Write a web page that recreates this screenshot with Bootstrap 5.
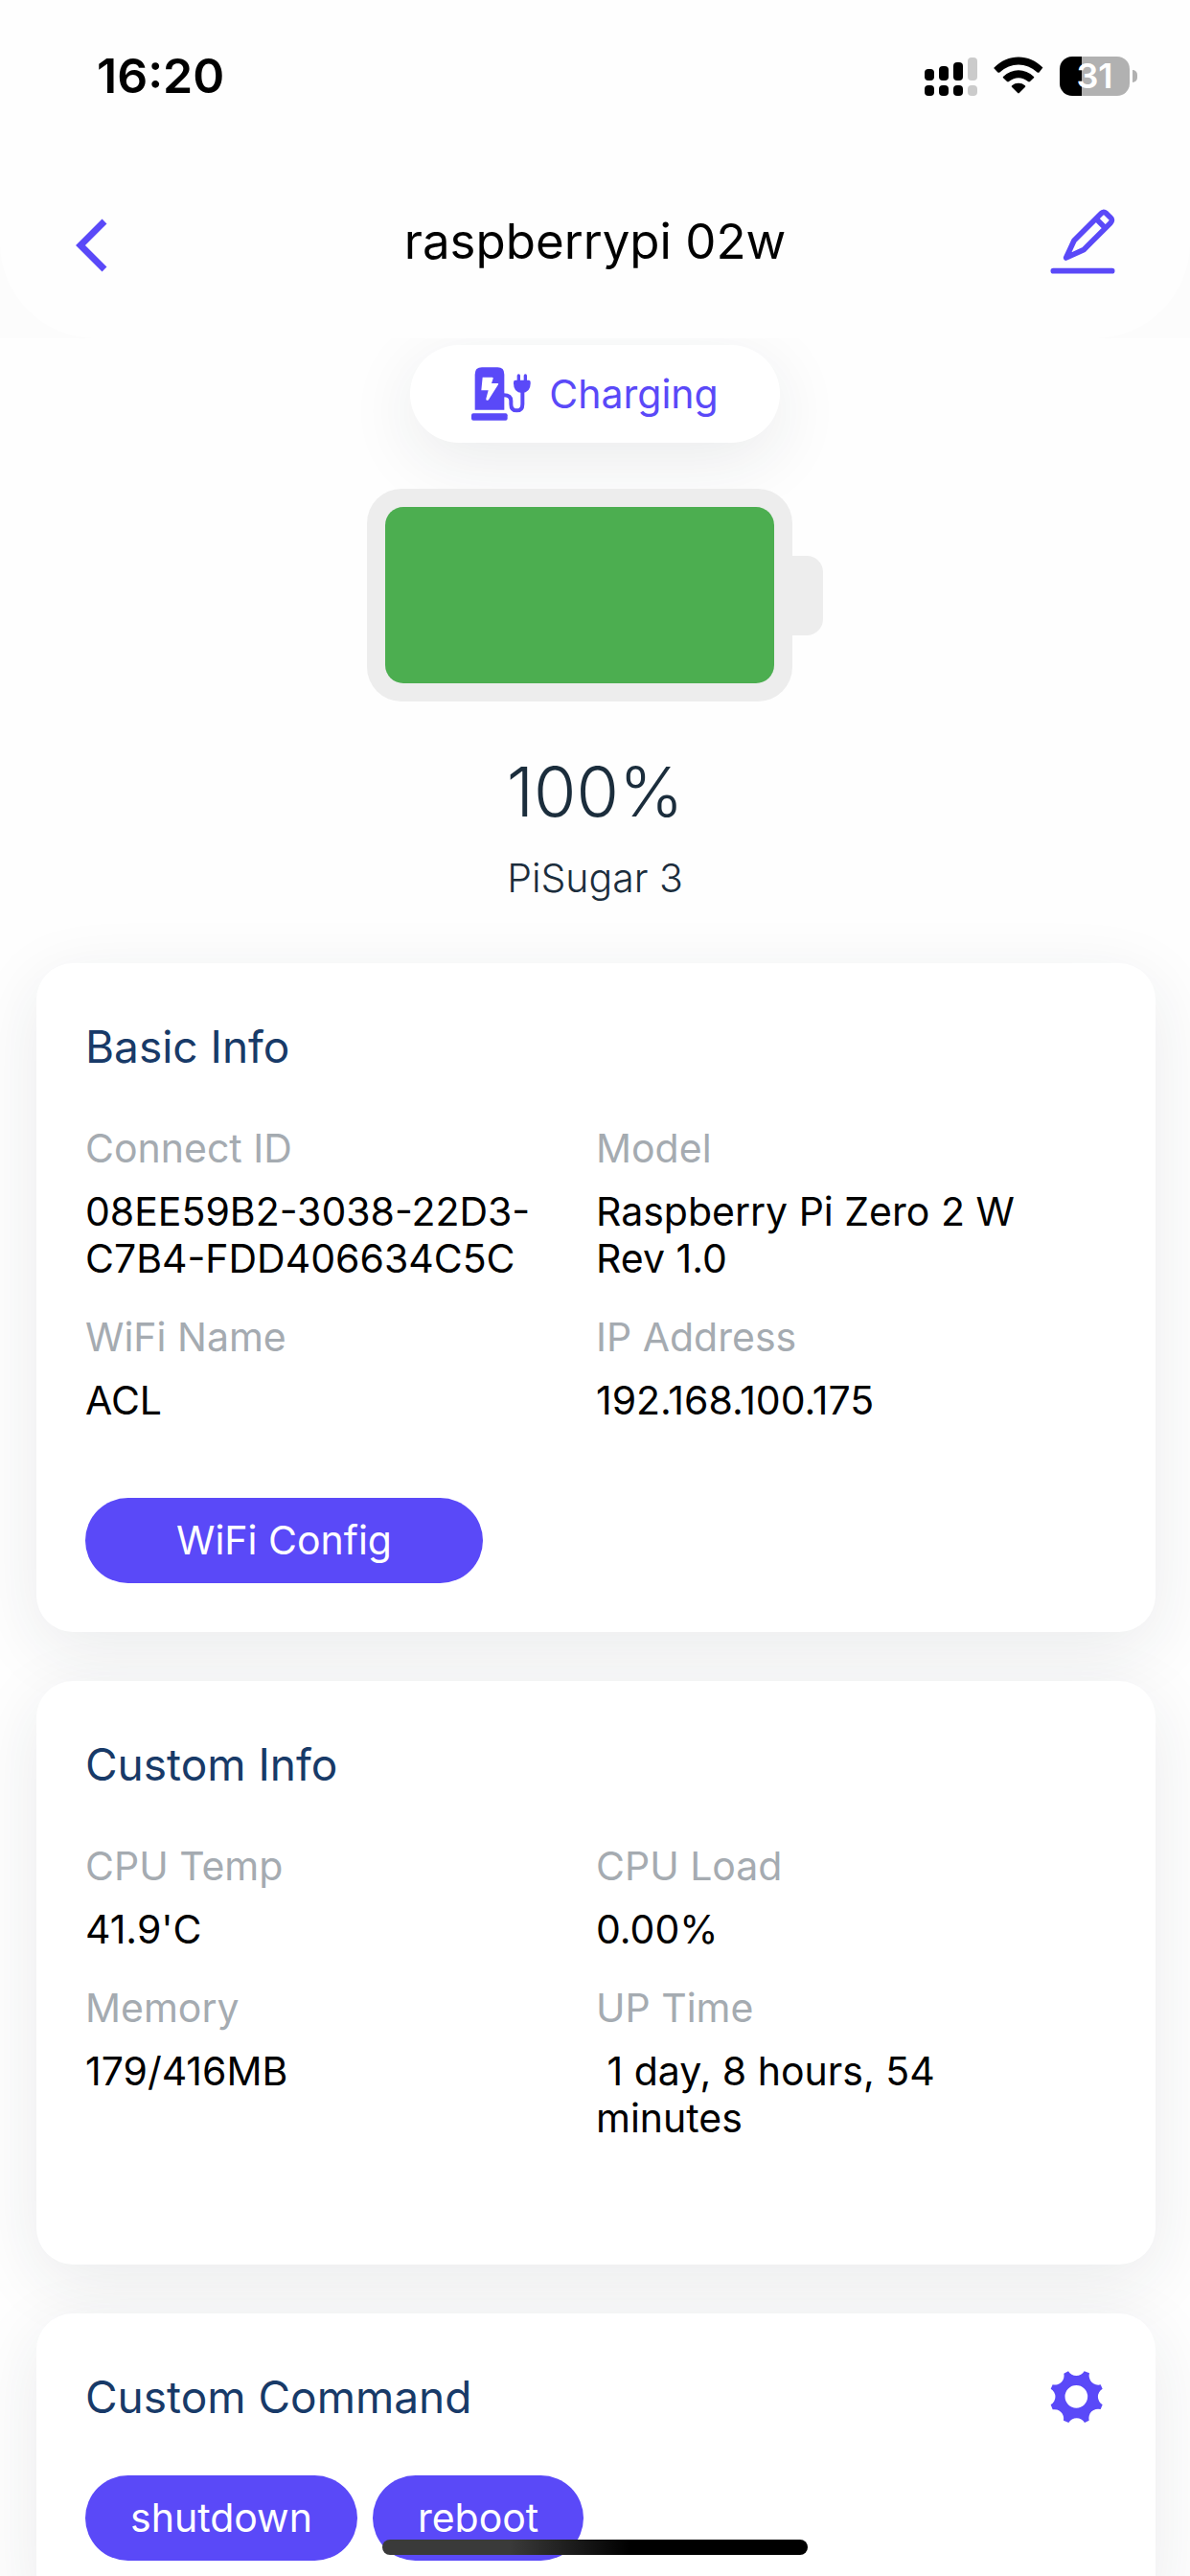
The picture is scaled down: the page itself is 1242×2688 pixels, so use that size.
<!DOCTYPE html>
<html lang="en">
<head>
<meta charset="utf-8">
<meta name="viewport" content="width=device-width, initial-scale=1">
<title>raspberrypi 02w</title>
<link href="https://cdn.jsdelivr.net/npm/bootstrap@5.3.0/dist/css/bootstrap.min.css" rel="stylesheet">
<style>
  :root { --accent: #5a49f8; --navy: #183a68; --ink: #1b2d3c; --muted: #a5abb1; }
  body { font-family: Inter, "Liberation Sans", sans-serif; background: #fefefe; color: #000; font-size: 41px; line-height: 49px; }
  .app { height: 100vh; }
  .top-wrap { background: #fcfcfc; }
  .top-panel { background: #fefefe; border-radius: 0 0 100px 100px; }
  .status-bar { height: 158px; padding: 0 55px 0 101px; }
  .clock { font-size: 50px; font-weight: 600; }
  .status-icons { gap: 17px; }
  .phone-battery { width: 73px; height: 41px; border-radius: 13px; background: linear-gradient(90deg, #000 23px, #b1b1b1 23px); color: #fff; font-size: 36px; font-weight: 600; line-height: 41px; }
  .phone-battery-tip { width: 5px; height: 13px; margin-left: 3px; border-radius: 0 7px 7px 0; background: #b1b1b1; }
  .title-bar { height: 195px; padding: 0 78px 8px 78px; }
  .page-title { font-size: 51px; line-height: 60px; font-weight: 400; }
  .icon-btn { border: 0; background: none; padding: 0; line-height: 0; color: var(--accent); }
  .scroller { overflow-y: auto; scrollbar-width: none; min-height: 0; }
  .scroller::-webkit-scrollbar { display: none; }
  .hero { padding: 7px 0 64px; color: var(--ink); }
  .soft { box-shadow: 0 18px 72px rgba(36, 40, 60, .09); }
  .charge-pill { height: 102px; padding: 0 64px; gap: 19px; border-radius: 51px; background: #fff; color: var(--accent); margin-bottom: 48px; }
  .cell { width: 444px; height: 222px; padding: 19px; border-radius: 36px; background: #ededed; }
  .cell-level { height: 100%; border-radius: 19px; background: #4cae50; }
  .cell-tip { width: 32px; height: 83px; border-radius: 0 17px 17px 0; background: #ededed; }
  .percent { font-size: 72px; line-height: 88px; font-weight: 300; margin: 50px 0 22px; }
  .thin { font-weight: 300; }
  .panels { gap: 51px; padding: 0 36px 51px 38px; }
  .panel { border: 0; border-radius: 38px; background: #fff; padding: 57px 51px 51px; }
  .panel-title { font-size: 46px; line-height: 60px; font-weight: 400; color: var(--navy); margin: 0; }
  .panel-head { margin-bottom: 52px; }
  .facts { margin-bottom: 44px; }
  .fact { margin-bottom: 33px; padding-right: 51px; }
  .fact dt { font-weight: 400; color: var(--muted); margin-bottom: 17px; }
  .fact dd { margin: 0; }
  .btn-pill { --bs-btn-color: #fff; --bs-btn-bg: var(--accent); --bs-btn-hover-color: #fff; --bs-btn-hover-bg: #4938e6; height: 89px; border: 0; border-radius: 45px; padding: 0 47px; font-size: 41px; line-height: 49px; }
  .btn-wide { width: 415px; }
  .home-bar { width: 444px; height: 16px; bottom: 22px; border-radius: 8px; background: linear-gradient(90deg, #3a3a3a 30%, #000 58%); }
</style>
</head>
<body>
<div class="app d-flex flex-column">
  <header class="top-wrap flex-shrink-0">
    <div class="top-panel">
      <div class="status-bar d-flex align-items-center justify-content-between">
        <span class="clock">16:20</span>
        <div class="status-icons d-flex align-items-center">
          <svg width="55" height="41" viewBox="0 0 55 41" aria-label="Signal">
            <g fill="#000"><rect x="0" y="13" width="10" height="12" rx="4"/><rect x="15" y="10" width="10" height="15" rx="4"/><rect x="30" y="6" width="10" height="19" rx="4"/><rect x="0" y="30" width="10" height="11" rx="4"/><rect x="15" y="30" width="10" height="11" rx="4"/><rect x="30" y="30" width="10" height="11" rx="4"/></g>
            <g fill="#cbcbcb"><rect x="45" y="1" width="10" height="24" rx="4"/><rect x="45" y="30" width="10" height="11" rx="4"/></g>
          </svg>
          <svg width="52" height="40" viewBox="0 0 52 40" aria-label="Wi-Fi">
            <path d="M.6 11.600C15-3.200 37-3.200 51.400 11.600L47.600 16.400Q46.600 17.300 45.600 16.400C34 5.700 18 5.700 6.400 16.400Q5.400 17.300 4.400 16.400L.6 12.600Q0 12 .6 11.600ZM10 21C19.500 12 32.500 12 42 21Q42.600 21.600 42 22.200L38 26.100Q37 27 36 26.100C30 21 22 21 16 26.100Q15 27 14 26.100L10 22.200Q9.400 21.600 10 21ZM19.200 30.200C23 26.900 29 26.900 32.800 30.200Q33.800 31 32.800 32L26.800 38Q26 38.800 25.200 38L19.200 32Q18.200 31 19.200 30.200Z"/>
          </svg>
          <div class="d-flex align-items-center">
            <div class="phone-battery text-center">31</div>
            <div class="phone-battery-tip"></div>
          </div>
        </div>
      </div>
      <nav class="title-bar d-flex align-items-center justify-content-between" aria-label="Device">
        <button class="icon-btn" type="button" aria-label="Back">
          <svg width="68" height="70" viewBox="0 0 68 70" fill="none" stroke="currentColor" stroke-width="7"><path d="M31 14L6 39L31 64"/></svg>
        </button>
        <h1 class="page-title m-0">raspberrypi 02w</h1>
        <button class="icon-btn" type="button" aria-label="Edit name">
          <svg width="68" height="70" viewBox="106 81 204 210" fill="none" stroke="currentColor" stroke-width="17" stroke-linejoin="round" stroke-linecap="round"><path d="M116 278H300M156 237L181 183L265 99Q273 90 282 98L294 110Q304 119 295 128L211 212ZM250 115L279 144"/></svg>
        </button>
      </nav>
    </div>
  </header>

  <main class="scroller flex-grow-1">
    <section class="hero d-flex flex-column align-items-center">
      <div class="charge-pill soft d-flex align-items-center">
        <svg width="62" height="56" viewBox="0 0 186 168" fill="currentColor" aria-hidden="true">
          <path fill-rule="evenodd" d="M11 134V23Q11 1 33 1H82Q103 1 103 23V134ZM35 32L31 73H53L46 99Q45 105 51 104Q54 104 56 99L84 55Q86 51 82 51H63L68 36Q69 32 65 32Z"/>
          <rect x="0" y="145" width="113" height="22" rx="6"/>
          <path d="M101 88Q124 88 124 106V116Q124 136 142 136Q160 136 160 116V76" fill="none" stroke="currentColor" stroke-width="12"/>
          <path d="M132 47Q132 41 138 41H179Q185 41 185 47V52Q185 80 158 81Q132 80 132 52Z"/>
          <path d="M148 45V27M169 45V27" stroke="currentColor" stroke-width="10" stroke-linecap="round"/>
        </svg>
        <span>Charging</span>
      </div>
      <div class="d-flex align-items-center" role="img" aria-label="Battery full">
        <div class="cell"><div class="cell-level" style="width:100%"></div></div>
        <div class="cell-tip"></div>
      </div>
      <div class="percent">100%</div>
      <div class="thin">PiSugar 3</div>
    </section>

    <div class="panels d-flex flex-column">
      <section class="panel card soft">
        <div class="panel-head"><h2 class="panel-title">Basic Info</h2></div>
        <dl class="facts row g-0">
          <div class="fact col-6"><dt>Connect ID</dt><dd>08EE59B2-3038-22D3-<wbr>C7B4-FDD406634C5C</dd></div>
          <div class="fact col-6"><dt>Model</dt><dd>Raspberry Pi Zero 2 W Rev 1.0</dd></div>
          <div class="fact col-6"><dt>WiFi Name</dt><dd>ACL</dd></div>
          <div class="fact col-6"><dt>IP Address</dt><dd>192.168.100.175</dd></div>
        </dl>
        <div class="d-flex"><button class="btn btn-pill btn-wide" type="button">WiFi Config</button></div>
      </section>

      <section class="panel card soft">
        <div class="panel-head"><h2 class="panel-title">Custom Info</h2></div>
        <dl class="facts row g-0">
          <div class="fact col-6"><dt>CPU Temp</dt><dd>41.9'C</dd></div>
          <div class="fact col-6"><dt>CPU Load</dt><dd>0.00%</dd></div>
          <div class="fact col-6"><dt>Memory</dt><dd>179/416MB</dd></div>
          <div class="fact col-6"><dt>UP Time</dt><dd>&nbsp;1 day, 8 hours, 54 minutes</dd></div>
        </dl>
      </section>

      <section class="panel card soft">
        <div class="panel-head d-flex align-items-center justify-content-between">
          <h2 class="panel-title">Custom Command</h2>
          <button class="icon-btn" type="button" aria-label="Command settings">
            <svg width="64" height="56" viewBox="61 102 192 168" fill="currentColor"><path fill-rule="evenodd" d="M133 106A29 29 0 0 0 183 106L199 112A29 29 0 0 0 234 148L240 161A29 29 0 0 0 240 211L234 225A29 29 0 0 0 198 260L184 267A29 29 0 0 0 134 267L118 260A29 29 0 0 0 84 226L78 211A29 29 0 0 0 78 161L84 148A29 29 0 0 0 119 113ZM158 150A35 35 0 1 0 158 221A35 35 0 1 0 158 150Z"/></svg>
          </button>
        </div>
        <div class="d-flex gap-3">
          <button class="btn btn-pill" type="button">shutdown</button>
          <button class="btn btn-pill" type="button">reboot</button>
        </div>
      </section>
    </div>
  </main>
</div>
<div class="home-bar position-fixed start-50 translate-middle-x"></div>
<script src="https://cdn.jsdelivr.net/npm/bootstrap@5.3.0/dist/js/bootstrap.bundle.min.js"></script>
</body>
</html>
